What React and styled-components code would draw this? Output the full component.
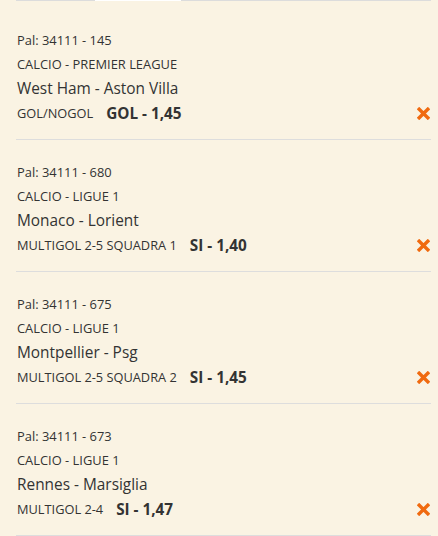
import React from "react";
import styled, { createGlobalStyle } from "styled-components";

const GlobalStyle = createGlobalStyle`
  html, body {
    margin: 0;
    padding: 0;
    background: #faf3e3;
  }
  body {
    font-family: "Open Sans", "Noto Sans", sans-serif;
    color: #333;
  }
`;

const bets = [
  { pal: "34111 - 145", sport: "CALCIO - PREMIER LEAGUE", match: "West Ham - Aston Villa", market: "GOL/NOGOL", pick: "GOL - 1,45" },
  { pal: "34111 - 680", sport: "CALCIO - LIGUE 1", match: "Monaco - Lorient", market: "MULTIGOL 2-5 SQUADRA 1", pick: "SI - 1,40" },
  { pal: "34111 - 675", sport: "CALCIO - LIGUE 1", match: "Montpellier - Psg", market: "MULTIGOL 2-5 SQUADRA 2", pick: "SI - 1,45" },
  { pal: "34111 - 673", sport: "CALCIO - LIGUE 1", match: "Rennes - Marsiglia", market: "MULTIGOL 2-4", pick: "SI - 1,47" },
];

const App = () => {
  return (
    <Wrapper>
      <GlobalStyle />
      <Tabs>
        <Tab />
        <Tab active />
        <Tab grow />
      </Tabs>
      <List>
        {bets.map((b) => (
          <Bet key={b.pal}>
            <Small>Pal: {b.pal}</Small>
            <Small>{b.sport}</Small>
            <Match>{b.match}</Match>
            <MarketRow>
              <Market>{b.market}</Market>
              <Pick>{b.pick}</Pick>
              <Remove aria-label="rimuovi">
                <svg width="13" height="13" viewBox="0 0 13 13">
                  <path d="M2.2 2.2 L10.8 10.8 M10.8 2.2 L2.2 10.8" stroke="#f06a0f" strokeWidth="3.4" strokeLinecap="square" />
                </svg>
              </Remove>
            </MarketRow>
          </Bet>
        ))}
      </List>
    </Wrapper>
  );
};

const Wrapper = styled.div`
  width: 438px;
  height: 536px;
  overflow: hidden;
  padding: 0 7px 0 16px;
  box-sizing: border-box;
`;

const Tabs = styled.div`
  display: flex;
  height: 1px;
`;

const Tab = styled.div`
  width: ${(p) => (p.active ? "86px" : "79px")};
  flex: ${(p) => (p.grow ? 1 : "none")};
  background: ${(p) => (p.active ? "#ffffff" : "#dcdcdc")};
`;

const List = styled.div`
  display: flex;
  flex-direction: column;
  padding-top: 7px;
`;

const Bet = styled.div`
  padding: 20px 0 14px 1px;
  border-bottom: 1px solid #dddddd;
  display: flex;
  flex-direction: column;
`;

const Small = styled.div`
  font-size: 12.9px;
  line-height: 24px;
`;

const Match = styled.div`
  font-size: 15.4px;
  line-height: 25px;
`;

const MarketRow = styled.div`
  display: flex;
  align-items: center;
  height: 24px;
`;

const Market = styled.span`
  font-size: 12.8px;
`;

const Pick = styled.span`
  font-size: 15.3px;
  font-weight: 700;
  margin-left: 13px;
`;

const Remove = styled.span`
  margin-left: auto;
  margin-right: 1px;
  display: flex;
`;

export default App;
